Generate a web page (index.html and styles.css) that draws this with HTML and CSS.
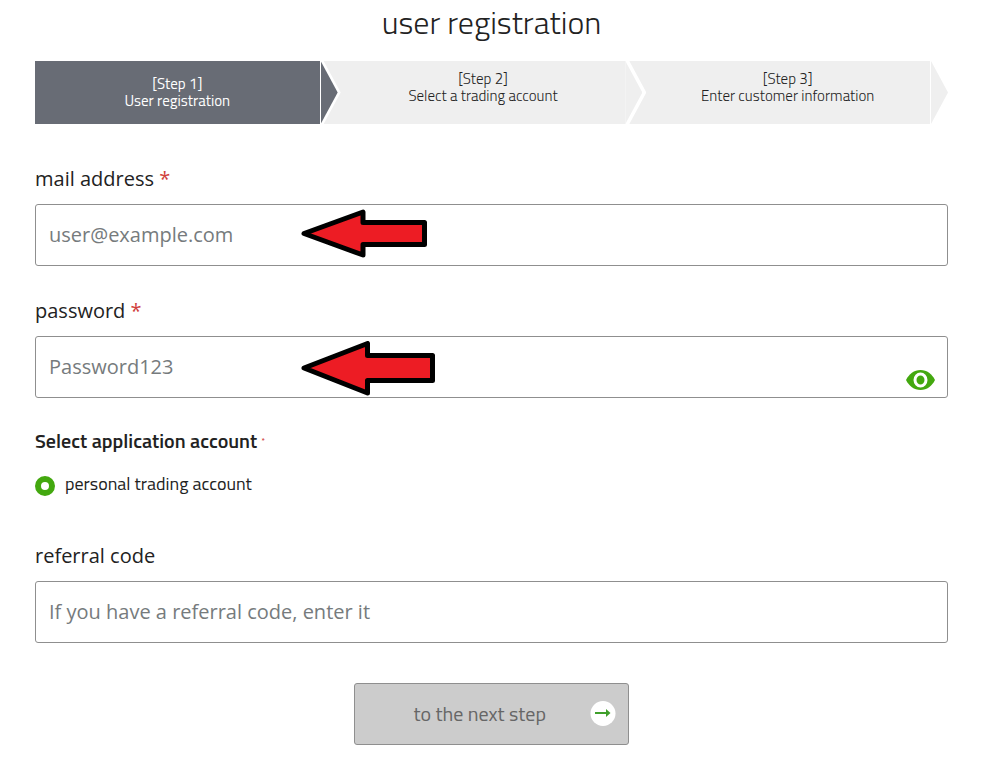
FILE: index.html
```html
<!DOCTYPE html>
<html lang="en">

<head>
    <meta charset="UTF-8">
    <meta name="viewport" content="width=device-width, initial-scale=1.0">
    <title>User registration</title>
    <link rel="stylesheet" href="styles.css">
</head>

<body>
    <main class="container">
        <h1>user registration</h1>

        <ol class="steps">
            <li class="step active">[Step 1]<br>User registration</li>
            <li class="step">[Step 2]<br>Select a trading account</li>
            <li class="step">[Step 3]<br>Enter customer information</li>
        </ol>

        <form>
            <div class="field">
                <label for="email">mail address <span class="required">*</span></label>
                <div class="input-box">
                    <input type="email" id="email" name="email" placeholder="user@example.com" required>
                    <svg class="pointer" width="126" height="49" viewBox="0 0 126 49" aria-hidden="true">
                        <path d="M3 24.5 62 3V13.5H123.5V35.5H62V46Z" />
                    </svg>
                </div>
            </div>

            <div class="field">
                <label for="password">password <span class="required">*</span></label>
                <div class="input-box">
                    <input type="password" id="password" name="password" placeholder="Password123" required>
                    <svg class="pointer" width="134" height="56" viewBox="0 0 134 56" aria-hidden="true">
                        <path d="M3 27 66.5 2.5V14.5H131.5V39.5H66.5V52Z" />
                    </svg>
                    <button type="button" class="show-password" aria-label="Show password">
                        <svg width="29" height="20" viewBox="0 0 29 20">
                            <path fill="#43a80f" d="M0 10C3 4 8 0 14.5 0S26 4 29 10C26 16 21 20 14.5 20S3 16 0 10Z" />
                            <ellipse cx="14.5" cy="10" rx="5.5" ry="6" fill="none" stroke="#fff" stroke-width="3" />
                        </svg>
                    </button>
                </div>
            </div>

            <fieldset class="account">
                <legend>Select application account <span class="required">*</span></legend>
                <label class="radio">
                    <input type="radio" name="account" value="personal" checked>
                    <span>personal trading account</span>
                </label>
            </fieldset>

            <div class="field">
                <label for="referral">referral code</label>
                <div class="input-box">
                    <input type="text" id="referral" name="referral" placeholder="If you have a referral code, enter it">
                </div>
            </div>

            <button type="submit" class="next">
                <span>to the next step</span>
                <svg width="26" height="26" viewBox="0 0 26 26" aria-hidden="true">
                    <circle cx="13" cy="13.5" r="12.5" fill="#fff" />
                    <path d="M5 12H16V9L20.5 13 16 17V14H5Z" fill="#3f9f2b" />
                </svg>
            </button>
        </form>
    </main>
</body>

</html>
```

FILE: styles.css
```css
* {
    box-sizing: border-box;
}

body {
    margin: 0;
    font-family: "Open Sans", sans-serif;
    font-size: 20px;
    color: #222;
    background-color: #fff;
}

.container {
    padding: 0 60px 36px 35px;
}

h1 {
    margin: 0 0 17px;
    font-family: "Titillium Web", Roboto, sans-serif;
    font-size: 32px;
    font-weight: 300;
    line-height: 44px;
    text-align: center;
}

/* progress bar */
.steps {
    display: flex;
    height: 63px;
    margin: 0 17px 41px 0;
    padding: 0;
    list-style: none;
    font-family: "Titillium Web", Roboto, sans-serif;
    font-size: 15px;
    font-weight: 300;
    line-height: 17px;
    text-align: center;
}

.step {
    position: relative;
    flex: 1;
    padding: 9px 0 0 20px;
    background-color: #efefef;
}

.step.active {
    padding: 14px 0 0;
    background-color: #686c75;
    color: #fff;
    font-weight: 400;
}

.step.active,
.step:last-child {
    border-right: 1px solid #fff;
}

.step::before,
.step::after {
    content: "";
    position: absolute;
    z-index: 1;
    top: 0;
    left: 100%;
    height: 100%;
}

.step::before {
    width: 21px;
    background-color: #fff;
    clip-path: polygon(0 0, 4px 0, 100% 50%, 4px 100%, 0 100%);
}

.step::after {
    width: 17px;
    background-color: #efefef;
    clip-path: polygon(0 0, 100% 50%, 0 100%);
}

.step.active::after,
.step:last-child::after {
    margin-left: 1px;
}

.step.active::after {
    background-color: #686c75;
}

/* form */
.field {
    margin-bottom: 31px;
}

.field label {
    display: block;
    margin-bottom: 11px;
    line-height: 28px;
}

.required {
    color: #d0403c;
}

.input-box {
    position: relative;
}

.input-box input {
    display: block;
    width: 100%;
    height: 62px;
    padding: 0 13px 2px;
    border: 1px solid #8f8f8f;
    border-radius: 3px;
    background-color: #fff;
    color: #222;
    font: inherit;
}

.input-box input::placeholder {
    color: #767b7d;
}

.pointer {
    position: absolute;
    top: 5px;
    left: 266px;
    fill: #ed1c24;
    stroke: #000;
    stroke-width: 5;
    stroke-linejoin: round;
    pointer-events: none;
}

.show-password {
    position: absolute;
    right: 13px;
    bottom: 8px;
    padding: 0;
    border: none;
    background: none;
    line-height: 0;
    cursor: pointer;
}

.account {
    margin: 0 0 42px;
    padding: 0;
    border: none;
    font-family: "Titillium Web", Roboto, sans-serif;
}

.account legend {
    margin-bottom: 19px;
    padding: 0;
    font-weight: 600;
    line-height: 24px;
}

.account .required {
    font-size: 8px;
    line-height: 8px;
    vertical-align: 4px;
}

.radio {
    display: flex;
    align-items: center;
    gap: 10px;
    font-size: 18px;
    line-height: 24px;
}

.radio span {
    padding-bottom: 4px;
}

.radio input {
    appearance: none;
    width: 20px;
    height: 20px;
    margin: 0;
    border: 6px solid #43a80f;
    border-radius: 50%;
    background-color: #fff;
}

.next {
    display: flex;
    align-items: center;
    justify-content: flex-end;
    gap: 44px;
    width: 275px;
    height: 62px;
    margin: 40px auto 0;
    padding: 0 12px 2px;
    border: 1px solid #8f8f8f;
    border-radius: 3px;
    background-color: #ccc;
    color: #666;
    font-family: "Titillium Web", Roboto, sans-serif;
    font-size: 20px;
    cursor: pointer;
}
```
